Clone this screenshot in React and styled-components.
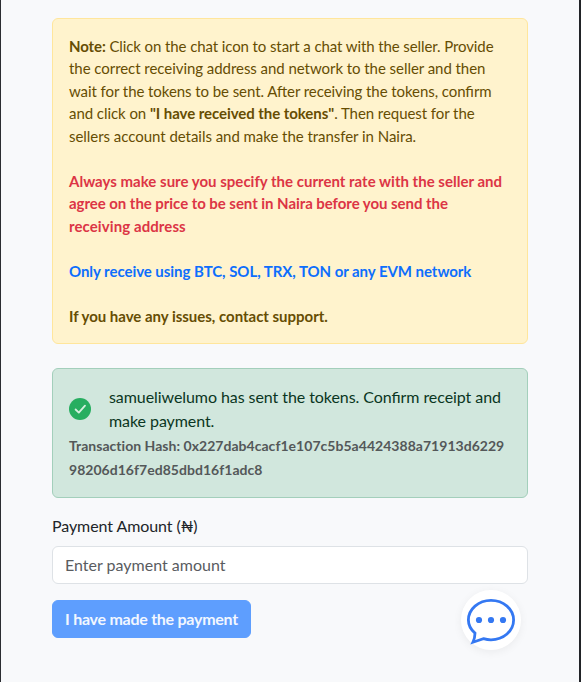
import React from "react";
import styled, { createGlobalStyle } from "styled-components";

const GlobalStyle = createGlobalStyle`
  *, *::before, *::after { box-sizing: border-box; }
  body {
    margin: 0;
    font-family: Lato, "Liberation Sans", sans-serif;
    font-size: 16px;
    line-height: 1.5;
    color: #212529;
    background: #f8f9fb;
  }
`;

const Page = styled.main`
  height: 682px;
  overflow: hidden;
  padding: 17.5px 51px 0;
  background: #f8f9fb;
  border-left: 1px solid #2b2d31;
  border-right: 2px solid #212327;
`;

const Alert = styled.section`
  padding: 16px;
  border: 1px solid ${(p) => p.$border};
  border-radius: 6px;
  background: ${(p) => p.$background};
  color: ${(p) => p.$color};
`;

const NoteAlert = styled(Alert)`
  margin-bottom: 24px;
  font-size: 15px;
  line-height: 22.5px;
`;

const SentAlert = styled(Alert)`
  margin-bottom: 16px;
`;

const Paragraph = styled.p`
  margin: 0 0 22.5px;
  color: ${(p) => p.$color || "inherit"};
  font-weight: ${(p) => (p.$bold ? 700 : 400)};

  &:last-child { margin-bottom: 0; }
`;

const Line = styled.span`
  display: block;
  white-space: nowrap;
  letter-spacing: ${(p) => p.$tracking || 0}px;
  font-feature-settings: ${(p) => (p.$ligatures ? '"liga" 1' : "normal")};
`;

const Status = styled.div`
  display: flex;
  align-items: center;
  gap: 18px;
  letter-spacing: -0.07px;
  font-feature-settings: "liga" 1;
`;

const CheckIcon = styled.svg`
  flex: none;
  width: 22px;
  height: 22px;
`;

const Hash = styled.div`
  padding-top: 1px;
  margin-bottom: -1px;
  color: #545859;
  font-size: 14px;
  font-weight: 700;
  line-height: 24px;
`;

const Label = styled.label`
  display: block;
  margin-bottom: 8px;
  letter-spacing: -0.08px;
`;

const Input = styled.input`
  display: block;
  width: 100%;
  height: 38px;
  margin: 0 0 16px;
  padding: 5px 12px 7px;
  border: 1px solid #dee2e6;
  border-radius: 6px;
  background: #fff;
  color: #212529;
  font: inherit;

  &::placeholder { color: #595c5f; opacity: 1; }
`;

const PayButton = styled.button`
  width: 199px;
  height: 38px;
  padding: 6px 12px;
  border: 1px solid #5e9efe;
  border-radius: 6px;
  background: #5e9efe;
  color: #f2f7ff;
  font: inherit;
  font-weight: 700;
  letter-spacing: -0.26px;
  white-space: nowrap;
`;

const ChatButton = styled.button`
  position: fixed;
  right: 60px;
  bottom: 32px;
  display: grid;
  place-items: center;
  width: 60px;
  height: 60px;
  padding: 0;
  border: 0;
  border-radius: 50%;
  background: #fff;
  box-shadow: 0 2px 10px rgba(0, 0, 0, 0.06);
`;

export default function App() {
  return (
    <>
      <GlobalStyle />
      <Page>
        <NoteAlert $background="#fff3cd" $border="#ffe69c" $color="#664d03">
          <Paragraph>
            <Line $tracking={-0.1}>
              <strong>Note:</strong> Click on the chat icon to start a chat with the seller. Provide
            </Line>
            <Line $tracking={-0.05}>the correct receiving address and network to the seller and then</Line>
            <Line $tracking={-0.07} $ligatures>wait for the tokens to be sent. After receiving the tokens, confirm</Line>
            <Line $tracking={-0.06}>
              and click on <strong>"I have received the tokens"</strong>. Then request for the
            </Line>
            <Line $tracking={-0.04}>sellers account details and make the transfer in Naira.</Line>
          </Paragraph>
          <Paragraph $bold $color="#dc3545">
            <Line $tracking={0.01}>Always make sure you specify the current rate with the seller and</Line>
            <Line $tracking={-0.05}>agree on the price to be sent in Naira before you send the</Line>
            <Line $tracking={0.09}>receiving address</Line>
          </Paragraph>
          <Paragraph $bold $color="#0d6efd">
            <Line $tracking={-0.05}>Only receive using BTC, SOL, TRX, TON or any EVM network</Line>
          </Paragraph>
          <Paragraph $bold>
            <Line $tracking={-0.02}>If you have any issues, contact support.</Line>
          </Paragraph>
        </NoteAlert>

        <SentAlert $background="#d1e7dd" $border="#a3cfbb" $color="#0a3622">
          <Status>
            <CheckIcon viewBox="0 0 22 22" aria-hidden="true">
              <circle cx="11" cy="11" r="11" fill="#27ae60" />
              <path d="M6.6 11.5 9.8 14.6 16 7.6" fill="none" stroke="#d5efdf" strokeWidth="1.8" strokeLinecap="round" strokeLinejoin="round" />
            </CheckIcon>
            <span>samueliwelumo has sent the tokens. Confirm receipt and make payment.</span>
          </Status>
          <Hash>
            <Line $tracking={0.03}>Transaction Hash: 0x227dab4cacf1e107c5b5a4424388a71913d6229</Line>
            <Line $tracking={0.03}>98206d16f7ed85dbd16f1adc8</Line>
          </Hash>
        </SentAlert>

        <Label htmlFor="amount">Payment Amount (₦)</Label>
        <Input id="amount" placeholder="Enter payment amount" />
        <PayButton type="button">I have made the payment</PayButton>
      </Page>
      <ChatButton type="button" aria-label="Open chat">
        <svg width="60" height="60" viewBox="0 0 60 60" aria-hidden="true">
          <path d="M14 43.2C9.8 39.7 7.4 35.2 7.4 30.1 7.4 19.2 17.5 10.4 30 10.4s22.6 8.8 22.6 19.7S42.5 49.8 30 49.8c-2.8 0-5.300-.5-7.600-1.200L12 52.200C13.500 49 13.900 46.200 14 43.200Z" fill="none" stroke="#3478f2" strokeWidth="2.8" />
          <circle cx="18" cy="30" r="3.1" fill="#3478f2" />
          <circle cx="30" cy="30" r="3.1" fill="#3478f2" />
          <circle cx="42" cy="30" r="3.1" fill="#3478f2" />
        </svg>
      </ChatButton>
    </>
  );
}
